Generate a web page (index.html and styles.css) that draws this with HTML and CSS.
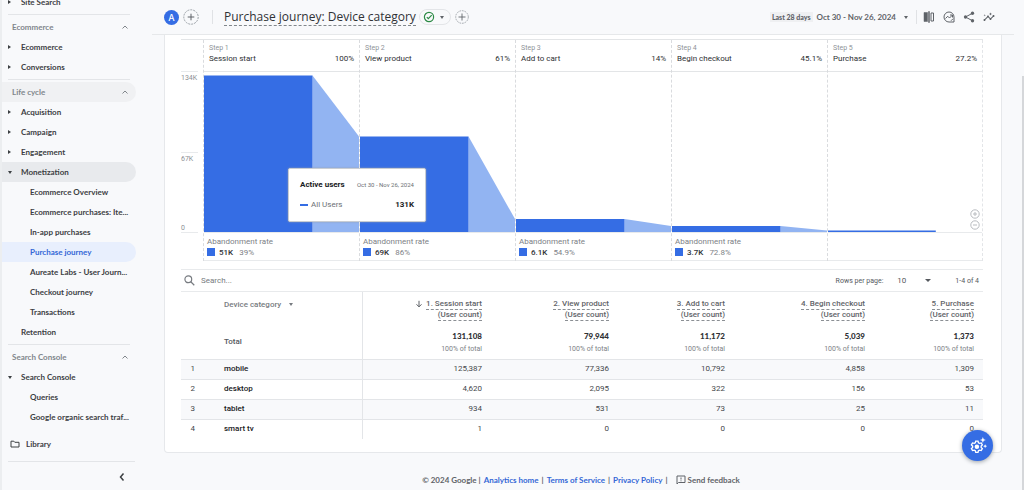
FILE: index.html
```html
<!DOCTYPE html>
<html lang="en">
<head>
<meta charset="utf-8">
<meta name="viewport" content="width=device-width, initial-scale=1">
<title>Purchase journey: Device category</title>
<link rel="stylesheet" href="styles.css">
</head>
<body>
<div class="app">
  <nav class="sidebar" aria-label="Reports">
    <a class="item parent" href="#"><i class="tri right"></i>Site Search</a>
    <hr class="rule">
    <button class="group" type="button">Ecommerce<svg class="chev" viewBox="0 0 8 8"><path d="M1.500 5.500 4 3l2.500 2.500"/></svg></button>
    <a class="item parent" href="#"><i class="tri right"></i>Ecommerce</a>
    <a class="item parent" href="#"><i class="tri right"></i>Conversions</a>
    <hr class="rule">
    <button class="group hover" type="button">Life cycle<svg class="chev" viewBox="0 0 8 8"><path d="M1.500 5.500 4 3l2.500 2.500"/></svg></button>
    <a class="item parent" href="#"><i class="tri right"></i>Acquisition</a>
    <a class="item parent" href="#"><i class="tri right"></i>Campaign</a>
    <a class="item parent" href="#"><i class="tri right"></i>Engagement</a>
    <a class="item parent open" href="#"><i class="tri down"></i>Monetization</a>
    <a class="item child" href="#">Ecommerce Overview</a>
    <a class="item child" href="#">Ecommerce purchases: Ite...</a>
    <a class="item child" href="#">In-app purchases</a>
    <a class="item child active" href="#" aria-current="page">Purchase journey</a>
    <a class="item child" href="#">Aureate Labs - User Journ...</a>
    <a class="item child" href="#">Checkout journey</a>
    <a class="item child" href="#">Transactions</a>
    <a class="item parent" href="#">Retention</a>
    <hr class="rule">
    <button class="group" type="button">Search Console<svg class="chev" viewBox="0 0 8 8"><path d="M1.500 5.500 4 3l2.500 2.500"/></svg></button>
    <a class="item parent" href="#"><i class="tri down"></i>Search Console</a>
    <a class="item child" href="#">Queries</a>
    <a class="item child" href="#">Google organic search traf...</a>
    <a class="item library" href="#"><svg class="folder" viewBox="0 0 10 8"><path d="M1 1.200h2.800l1 1.100H9v4.700H1z"/></svg>Library</a>
    <div class="foot"><button class="collapse" type="button" aria-label="Collapse menu"><svg viewBox="0 0 10 10"><path d="M6.500 1.500 3.500 5l3 3.500"/></svg></button></div>
  </nav>

  <div class="main">
    <header class="topbar">
      <span class="avatar">A</span>
      <button class="add" type="button" aria-label="Add comparison"><svg viewBox="0 0 16 16"><circle class="dash" cx="8" cy="8" r="7.200"/><path d="M8 4.700v6.600M4.700 8h6.600"/></svg></button>
      <span class="divider lead"></span>
      <h1 class="title">Purchase journey: Device category</h1>
      <button class="status" type="button" aria-label="Report status"><svg class="check" viewBox="0 0 12 12"><circle cx="6" cy="6" r="4.600"/><path d="m3.800 6.200 1.500 1.500 3.400-3.500"/></svg><i class="tri down"></i></button>
      <button class="add small" type="button" aria-label="Add"><svg viewBox="0 0 16 16"><circle class="dash" cx="8" cy="8" r="7.200"/><path d="M8 4v8M4 8h8"/></svg></button>
      <div class="tools">
        <button class="dates" type="button"><span class="badge">Last 28 days</span>Oct 30 - Nov 26, 2024<i class="tri down"></i></button>
        <span class="divider"></span>
        <button class="tool" type="button" aria-label="Edit comparisons"><svg viewBox="0 0 24 24"><path fill="currentColor" d="M2 3h7v18H2zM11 1h2v22h-2z"/><path class="line" d="M16 4h5v16h-5z"/></svg></button>
        <button class="tool" type="button" aria-label="Insights"><svg viewBox="0 0 24 24"><path class="line" d="M12 2a10 10 0 1 0 0 20h10V12A10 10 0 0 0 12 2z"/><path class="line" d="m5 15 4.500-4.500 3.500 3.500 5.500-5.500M14 8h5v5M16 19.500l4-4"/></svg></button>
        <button class="tool" type="button" aria-label="Share"><svg viewBox="0 0 24 24"><path class="line" d="M19 4.500 5 12l14 7.500"/><g fill="currentColor" stroke="none"><circle cx="19" cy="4.500" r="3.300"/><circle cx="5" cy="12" r="3.300"/><circle cx="19" cy="19.500" r="3.300"/></g></svg></button>
        <button class="tool" type="button" aria-label="Analytics intelligence"><svg viewBox="0 0 24 24"><path fill="currentColor" stroke="none" d="M21 8c-1.450 0-2.260 1.440-1.930 2.510l-3.550 3.560c-.3-.09-.74-.09-1.040 0l-2.550-2.550C12.270 10.450 11.460 9 10 9c-1.450 0-2.270 1.440-1.930 2.520l-4.560 4.550C2.440 15.740 1 16.550 1 18c0 1.100.9 2 2 2 1.450 0 2.260-1.440 1.930-2.510l4.550-4.560c.3.090.74.090 1.040 0l2.550 2.550C12.730 16.550 13.540 18 15 18c1.450 0 2.270-1.440 1.930-2.520l3.560-3.550C21.560 12.260 23 11.450 23 10c0-1.100-.9-2-2-2zM15 9l.94-2.070L18 6l-2.060-.93L15 3l-.92 2.070L12 6l2.080.93zM3.500 11l.5-2 2-.5L4 8l-.5-2L3 8l-2 .5L3 9z"/></svg></button>
      </div>
    </header>

    <main class="card">
      <section class="funnel">
        <div class="axis"><div class="scale"><span>134K</span><span class="mid">67K</span><span class="zero">0</span></div></div>
        <div class="step">
          <div class="head"><small>Step 1</small><p><span>Session start</span><span>100%</span></p></div>
          <svg class="plot" viewBox="0 0 100 160" preserveAspectRatio="none"><path class="flow" d="M70 3.500 100 64.500V160H70z"/><path class="bar" d="M0 3.500h70V160H0z"/></svg>
          <div class="drop">Abandonment rate<p><i></i><b>51K</b>39%</p></div>
        </div>
        <div class="step">
          <div class="head"><small>Step 2</small><p><span>View product</span><span>61%</span></p></div>
          <svg class="plot" viewBox="0 0 100 160" preserveAspectRatio="none"><path class="flow" d="M70 64.500 100 147V160H70z"/><path class="bar" d="M0 64.500h70V160H0z"/></svg>
          <div class="drop">Abandonment rate<p><i></i><b>69K</b>86%</p></div>
        </div>
        <div class="step">
          <div class="head"><small>Step 3</small><p><span>Add to cart</span><span>14%</span></p></div>
          <svg class="plot" viewBox="0 0 100 160" preserveAspectRatio="none"><path class="flow" d="M70 147 100 154V160H70z"/><path class="bar" d="M0 147h70V160H0z"/></svg>
          <div class="drop">Abandonment rate<p><i></i><b>6.1K</b>54.9%</p></div>
        </div>
        <div class="step">
          <div class="head"><small>Step 4</small><p><span>Begin checkout</span><span>45.1%</span></p></div>
          <svg class="plot" viewBox="0 0 100 160" preserveAspectRatio="none"><path class="flow" d="M70 154 100 158.500V160H70z"/><path class="bar" d="M0 154h70V160H0z"/></svg>
          <div class="drop">Abandonment rate<p><i></i><b>3.7K</b>72.8%</p></div>
        </div>
        <div class="step last">
          <div class="head"><small>Step 5</small><p><span>Purchase</span><span>27.2%</span></p></div>
          <svg class="plot" viewBox="0 0 100 160" preserveAspectRatio="none"><path class="bar" d="M0 158.500h70V160H0z"/></svg>
          <div class="drop"></div>
        </div>
        <div class="zoomer">
          <button type="button" aria-label="Zoom in"><svg viewBox="0 0 10 10"><circle cx="5" cy="5" r="4.200"/><path d="M5 3v4M3 5h4"/></svg></button>
          <button type="button" aria-label="Zoom out"><svg viewBox="0 0 10 10"><circle cx="5" cy="5" r="4.200"/><path d="M3 5h4"/></svg></button>
        </div>
        <div class="tooltip" role="tooltip">
          <p><b>Active users</b><span>Oct 30 - Nov 26, 2024</span></p>
          <p><span class="key"><i></i>All Users</span><b>131K</b></p>
        </div>
      </section>

      <div class="controls">
        <svg class="glass" viewBox="0 0 12 12"><circle cx="4.700" cy="4.700" r="3.700"/><path d="m7.400 7.400 3.800 3.800"/></svg>
        <input class="search" type="text" placeholder="Search..." aria-label="Search">
        <label class="rows"><span>Rows per page:</span>
          <select><option>10</option></select>
          <i class="tri down"></i>
        </label>
        <span>1-4 of 4</span>
      </div>

      <table class="data">
        <colgroup><col class="c-num"><col class="c-name"><col class="c-1"><col class="c-2"><col class="c-3"><col class="c-4"><col class="c-5"></colgroup>
        <thead>
          <tr>
            <th></th>
            <th class="name"><button class="dimension" type="button">Device category<i class="tri down"></i></button></th>
            <th><svg class="arrow" viewBox="0 0 8 8"><path d="M4 .8v6M1.500 4.300 4 6.900l2.500-2.600"/></svg><span>1. Session start</span><br><span>(User count)</span></th>
            <th><span>2. View product</span><br><span>(User count)</span></th>
            <th><span>3. Add to cart</span><br><span>(User count)</span></th>
            <th><span>4. Begin checkout</span><br><span>(User count)</span></th>
            <th><span>5. Purchase</span><br><span>(User count)</span></th>
          </tr>
        </thead>
        <tbody>
          <tr class="total"><td></td><th class="name" scope="row">Total</th><td><b>131,108</b><br>100% of total</td><td><b>79,944</b><br>100% of total</td><td><b>11,172</b><br>100% of total</td><td><b>5,039</b><br>100% of total</td><td><b>1,373</b><br>100% of total</td></tr>
          <tr><td>1</td><th class="name" scope="row">mobile</th><td>125,387</td><td>77,336</td><td>10,792</td><td>4,858</td><td>1,309</td></tr>
          <tr><td>2</td><th class="name" scope="row">desktop</th><td>4,620</td><td>2,095</td><td>322</td><td>156</td><td>53</td></tr>
          <tr><td>3</td><th class="name" scope="row">tablet</th><td>934</td><td>531</td><td>73</td><td>25</td><td>11</td></tr>
          <tr><td>4</td><th class="name" scope="row">smart tv</th><td>1</td><td>0</td><td>0</td><td>0</td><td>0</td></tr>
        </tbody>
      </table>
    </main>

    <footer class="legal">
      <span>© 2024 Google |</span><a href="#">Analytics home</a><span>|</span><a href="#">Terms of Service</a><span>|</span><a href="#">Privacy Policy</a><span>|</span>
      <button class="feedback" type="button"><svg viewBox="0 0 10 10"><path d="M1 9V1h8v6.500H2.500zM5 2.500v2M5 5.400v.9"/></svg>Send feedback</button>
    </footer>
  </div>
  <div class="scroll"></div>
  <button class="fab" type="button" aria-label="Customize">
    <svg viewBox="0 0 24 24"><path d="M9 5.500h3l.6 2.200 1.500.8 2.200-.6 1.500 2.600-1.600 1.600v1.800l1.600 1.600-1.500 2.600-2.200-.6-1.500.8-.6 2.200H9l-.6-2.200-1.500-.8-2.200.6-1.500-2.600 1.600-1.600v-1.800L3.200 10.500l1.500-2.600 2.200.6 1.500-.8z"/><circle cx="10.500" cy="13" r="3" class="solid"/><path class="solid" d="m18.500 0 1.100 2.900 2.900 1.100-2.900 1.100-1.100 2.900-1.100-2.900L14.500 4l2.900-1.100zM21.500 9.500l.8 1.900 1.900.8-1.900.8-.8 1.900-.8-1.900-1.900-.8 1.900-.8z"/></svg>
  </button>
</div>
</body>
</html>
```
FILE: styles.css
```css
* { box-sizing: border-box; }
body { margin: 0; background: #f8f9fb; color: #3c4043; font: 8px/12px Roboto, sans-serif; }
button, input, select { font: inherit; color: inherit; background: none; border: 0; padding: 0; margin: 0; }
a { color: inherit; text-decoration: none; }
p { margin: 0; }
svg { display: block; flex: none; fill: none; stroke: currentColor; }
.app { display: grid; grid-template-columns: 152px minmax(0, 1fr) 10px; min-height: 100vh; overflow: hidden; }
.tri { flex: none; width: 0; height: 0; border: 2px solid transparent; }
.tri.down { border-width: 3px 3px 0; border-top-color: currentColor; }
.tri.right { border-width: 2px 0 2px 3px; border-left-color: currentColor; }

/* Sidebar */
.sidebar { margin-top: -8px; padding-right: 16px; border-left: 2px solid #eceef0; font: 700 8px/20px Lato, sans-serif; color: #3c4043; }
.item, .group { display: flex; align-items: center; width: 100%; height: 20px; border-radius: 0 10px 10px 0; white-space: nowrap; }
.item { position: relative; }
.parent { padding-left: 19px; }
.parent .tri { position: absolute; left: 6px; }
.parent .tri.down { border-width: 3px 2px 0; }
.child { padding-left: 28px; }
.group { justify-content: space-between; padding: 0 7px 0 10px; color: #80868b; }
.hover { background: #f0f1f3; }
.open { background: #e8eaed; }
.active { background: #e8effd; color: #3367d6; }
.rule { height: 1px; margin: 2px 6px 2px 6px; border: 0; background: #e3e5e8; }
.chev { width: 8px; height: 8px; }
.library { margin-top: 7px; padding-left: 8px; gap: 6px; }
.folder { width: 10px; height: 8px; }
.foot { display: flex; justify-content: flex-end; margin: 7px 1px 0 6px; padding: 10px 8px 0 0; border-top: 1px solid #e3e5e8; }
.collapse svg { width: 10px; height: 10px; stroke-width: 1.500; }

/* Header */
.main { display: flex; flex-direction: column; }
.topbar { display: flex; align-items: center; height: 35px; padding-left: 12px; border-bottom: 1px solid #e6e8ea; font-family: Lato, sans-serif; color: #5f6368; }
.avatar { width: 15px; height: 15px; border-radius: 50%; background: #356de4; color: #fff; font: 500 9px/15px Inter, sans-serif; text-align: center; }
.add { margin-left: 4px; }
.add svg { width: 16px; height: 16px; }
.add.small svg { width: 14px; height: 14px; }
.dash { stroke: #9aa0a6; stroke-dasharray: 2 1; }
.divider { width: 1px; height: 14px; background: #e0e2e5; }
.lead { margin: 0 11px 0 13px; }
.title { margin: 0; border-bottom: 1px dashed #80868b; font: 400 12px/16px "Open Sans", sans-serif; color: #303236; white-space: nowrap; }
.status { display: flex; align-items: center; justify-content: space-between; width: 32px; height: 16px; margin: 0 0 0 3px; padding: 0 6px 0 3px; border: 1px solid #e3e5e8; border-radius: 8px; }
.status .tri, .dates .tri { border-width: 3px 2px 0; }
.check { width: 12px; height: 12px; color: #2c8a45; stroke-width: 1.200; }
.tools { display: flex; align-items: center; margin-left: auto; padding-right: 19px; gap: 8px; }
.tools .divider { margin-right: -2px; }
.dates { display: flex; align-items: center; gap: 4px; font-size: 8px; font-weight: 700; white-space: nowrap; }
.dates .tri { margin-left: 4px; }
.badge { padding: 0 2px; background: #eff0f2; font: 900 7px/10px Lato, sans-serif; }
.tool svg { width: 12px; height: 12px; }
.line { stroke-width: 2; }

/* Card */
.card { margin: 0 12px; padding: 4px 18px 13px 16px; background: #fff; border: 1px solid #e6e8eb; border-top: 0; border-radius: 0 0 4px 4px; }
.funnel { position: relative; display: grid; grid-template-columns: 22px repeat(5, minmax(0, 1fr)); border-top: 1px solid #e3e5e7; }
.axis { padding-top: 31px; color: #8b8f94; font-size: 7px; }
.scale { display: flex; flex-direction: column; justify-content: space-between; height: 162px; margin-right: 5px; border: solid #e8eaec; border-width: 1px 0; }
.mid { border-top: 1px solid #e8eaec; margin-top: 8px; }
.zero { line-height: 8px; }
.step { border-left: 1px dashed #d9dbde; }
.last { border-right: 1px dashed #e3e5e8; }
.head { height: 32px; padding: 3px 5px 0; border-bottom: 1px solid #e3e5e7; }
.head small { display: block; font-size: 7px; line-height: 10px; color: #8f9398; }
.head p { display: flex; justify-content: space-between; color: #2e3033; }
.plot { width: 100%; height: 160px; stroke: none; }
.bar { fill: #356de4; }
.flow { fill: #92b4f2; }
.drop { height: 29px; padding: 3px 3px 0; border: solid #e8eaec; border-width: 1px 0; line-height: 11px; color: #7d8186; }
.drop p { display: flex; align-items: center; height: 10px; }
.drop i { width: 8px; height: 8px; margin-right: 4px; background: #356de4; }
.drop b { margin-right: 6px; font-weight: 500; color: #303236; }
.zoomer { position: absolute; right: 3px; bottom: 31px; display: grid; gap: 1px; color: #b9bcc0; }
.zoomer svg { width: 10px; height: 10px; }
.tooltip { position: absolute; left: 107px; top: 128px; display: flex; flex-direction: column; gap: 8px; width: 138px; padding: 10px 11px; border: 1px solid #c9cdd3; border-radius: 2px; background: #fff; box-shadow: 0 0 2px #9aa0a6; color: #6b6f74; }
.tooltip p { display: flex; justify-content: space-between; white-space: nowrap; }
.tooltip p > span { font-size: 6px; }
.tooltip .key { display: flex; align-items: center; gap: 3px; font-size: 8px; }
.key i { width: 8px; height: 2px; background: #356de4; }
.tooltip b { color: #202124; }

/* Table */
.controls { display: flex; align-items: center; height: 23px; margin-top: 8px; padding: 0 4px 0 3px; border: solid #e8eaec; border-width: 1px 0; color: #55595e; }
.controls span { font-size: 7px; }
.glass { width: 11px; height: 11px; color: #777b80; stroke-width: 1.300; }
.search { flex: 1; min-width: 0; margin-left: 6px; outline: 0; }
.search::placeholder { color: #777b80; opacity: 1; }
.rows { display: flex; align-items: center; gap: 14px; margin-right: 24px; }
.rows select { appearance: none; width: 14px; }
.data { width: 100%; border-collapse: collapse; table-layout: fixed; color: #45484c; }
.c-num { width: 43px; }
.c-name { width: 138px; }
.c-1 { width: 129px; }
.c-2 { width: 127px; }
.c-3 { width: 116px; }
.c-4 { width: 140px; }
.c-5 { width: 109px; }
.data th, .data td { height: 20px; padding: 0 9px 0 0; text-align: right; font-weight: 400; white-space: nowrap; }
.data tr > :first-child { padding-right: 29px; }
.data .name { padding: 0; text-align: left; font-weight: 500; border-right: 1px solid #e3e5e8; color: #202124; }
.data thead th { height: 34px; padding-top: 7px; vertical-align: top; font-weight: 500; line-height: 11px; color: #5f6368; }
.data thead span { display: inline-block; border-bottom: 1px dashed #8b8f94; line-height: 10px; vertical-align: top; }
.data thead .name { padding-top: 7px; }
.arrow { display: inline-block; width: 8px; height: 8px; margin: 1px 3px 0 0; vertical-align: top; }
.dimension { display: flex; align-items: center; gap: 8px; color: #777b80; }
.dimension .tri { border-width: 3px 2px 0; }
.data .total > * { height: 33px; font-size: 7px; color: #7d8186; }
.data .total .name { font-size: 8px; color: #55595e; }
.total b { font: 900 8px/12px Lato, sans-serif; color: #303236; }
.data tbody tr + tr { border-top: 1px solid #e3e5e8; }
.data tbody tr:nth-child(even) { background: #f8f9fb; }

/* Footer */
.legal { display: flex; align-items: center; justify-content: center; gap: 3px; flex: 1; min-height: 36px; padding: 16px 4px 0 0; font: 700 8px/12px Lato, sans-serif; color: #5f6368; white-space: nowrap; }
.legal a { color: #3367d6; }
.feedback { display: flex; align-items: center; gap: 2px; margin-left: 5px; }
.feedback svg { width: 10px; height: 10px; }
.scroll { width: 2px; margin: 76px 0 0 auto; background: #d5d7da; }
.fab { position: fixed; right: 31px; bottom: 29px; display: grid; place-items: center; width: 31px; height: 31px; border-radius: 50%; background: #356de4; color: #fff; box-shadow: 0 1px 4px #9aa0a6; }
.fab svg { width: 18px; height: 18px; stroke-width: 1.800; }
.solid { fill: currentColor; stroke: none; }
```
